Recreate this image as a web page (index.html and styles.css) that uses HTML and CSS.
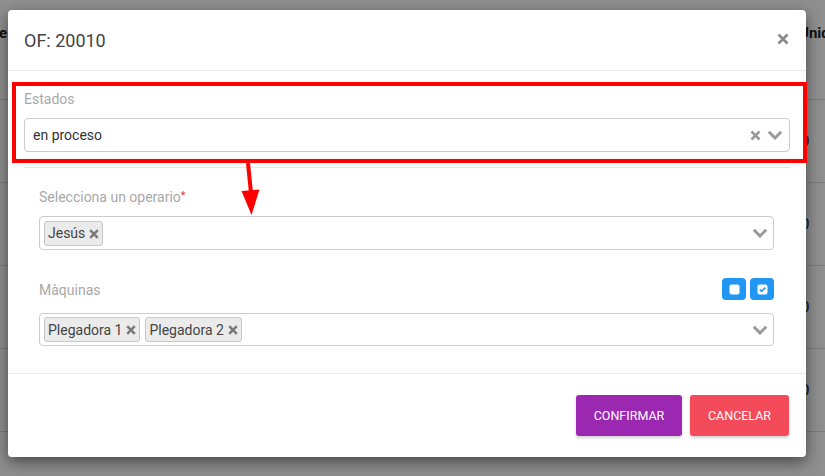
FILE: index.html
```html
<!DOCTYPE html>
<html lang="es">
<head>
<meta charset="utf-8">
<title>OF: 20010</title>
<link rel="stylesheet" href="styles.css">
</head>
<body>
<div class="page">
  <div class="thead">
    <div class="th th-left"><span>Nombre de fase</span></div>
    <div class="th-spacer"></div>
    <div class="th th-right">Unidades</div>
  </div>
  <div class="trow"><div class="td-spacer"></div><div class="td">0</div></div>
  <div class="trow"><div class="td-spacer"></div><div class="td">0</div></div>
  <div class="trow"><div class="td-spacer"></div><div class="td">0</div></div>
  <div class="trow"><div class="td-spacer"></div><div class="td">0</div></div>
</div>
<div class="overlay"></div>

<div class="modal">
  <div class="modal-header">
    <h4 class="modal-title">OF: 20010</h4>
    <svg class="close" width="12" height="12" viewBox="0 0 12 12"><path d="M1.5 1.5L10.5 10.5M10.5 1.5L1.5 10.5" stroke="#8a8a8a" stroke-width="2.6" stroke-linecap="butt"/></svg>
  </div>
  <div class="modal-body">
    <div class="group highlight">
      <label class="label">Estados</label>
      <div class="select">
        <span class="value">en proceso</span>
        <span class="indicators">
          <svg width="11" height="11" viewBox="0 0 11 11"><path d="M1.5 1.5L9.5 9.5M9.5 1.5L1.5 9.5" stroke="#9a9a9a" stroke-width="2.6"/></svg>
          <svg width="16" height="10" viewBox="0 0 16 10"><path d="M1.8 1.8L8 8L14.2 1.8" stroke="#9a9a9a" stroke-width="3" fill="none"/></svg>
        </span>
      </div>
    </div>
    <div class="divider"></div>
    <div class="fields">
      <div class="group">
        <label class="label">Selecciona un operario<span class="req">*</span></label>
        <div class="select multi">
          <span class="tags">
            <span class="tag">Jesús<svg width="10" height="10" viewBox="0 0 10 10"><path d="M1.2 1.2L8.8 8.8M8.8 1.2L1.2 8.8" stroke="#7a7a7a" stroke-width="2.6"/></svg></span>
          </span>
          <span class="indicators">
            <svg width="16" height="10" viewBox="0 0 16 10"><path d="M1.8 1.8L8 8L14.2 1.8" stroke="#9a9a9a" stroke-width="3" fill="none"/></svg>
          </span>
        </div>
      </div>
      <div class="group group-maq">
        <div class="label-row">
          <label class="label">Màquinas</label>
          <div class="toggles">
            <span class="btn-blue"><svg width="11" height="11" viewBox="0 0 11 11"><rect x="0.5" y="0.5" width="10" height="10" rx="2" fill="#fff"/></svg></span>
            <span class="btn-blue"><svg width="11" height="11" viewBox="0 0 11 11"><rect x="0.5" y="0.5" width="10" height="10" rx="2" fill="#fff"/><path d="M2.8 5.6L4.6 7.3L8.3 3.6" stroke="#2196f3" stroke-width="1.6" fill="none"/></svg></span>
          </div>
        </div>
        <div class="select multi">
          <span class="tags">
            <span class="tag">Plegadora 1<svg width="10" height="10" viewBox="0 0 10 10"><path d="M1.2 1.2L8.8 8.8M8.8 1.2L1.2 8.8" stroke="#7a7a7a" stroke-width="2.6"/></svg></span>
            <span class="tag">Plegadora 2<svg width="10" height="10" viewBox="0 0 10 10"><path d="M1.2 1.2L8.8 8.8M8.8 1.2L1.2 8.8" stroke="#7a7a7a" stroke-width="2.6"/></svg></span>
          </span>
          <span class="indicators">
            <svg width="16" height="10" viewBox="0 0 16 10"><path d="M1.8 1.8L8 8L14.2 1.8" stroke="#9a9a9a" stroke-width="3" fill="none"/></svg>
          </span>
        </div>
      </div>
    </div>
  </div>
  <div class="modal-footer">
    <button class="btn btn-confirm">CONFIRMAR</button>
    <button class="btn btn-cancel">CANCELAR</button>
  </div>
</div>

<svg class="annotation" width="825" height="476" viewBox="0 0 825 476">
  <path d="M248 163L251 193" stroke="#ff0000" stroke-width="4" fill="none"/>
  <path d="M241.5 191L259.5 189.5L251.5 215Z" fill="#ff0000"/>
</svg>
</body>
</html>
```
FILE: styles.css
```css
* { box-sizing: border-box; }
html, body {
  margin: 0;
  padding: 0;
}
body {
  width: 825px;
  height: 476px;
  overflow: hidden;
  position: relative;
  background: #fff;
  font-family: Roboto, "Liberation Sans", sans-serif;
  color: #333;
}

/* background page */
.page { width: 825px; overflow: hidden; }
.thead {
  display: flex;
  height: 100px;
  border-bottom: 1px solid #ddd;
  font-weight: 700;
  font-size: 15px;
  color: #222;
}
.thead > div, .trow > div { flex-shrink: 0; }
.th {
  padding-top: 24px;
  white-space: nowrap;
}
.th-left {
  width: 7px;
  display: flex;
  justify-content: flex-end;
}
.th-spacer { width: 792px; }
.trow {
  display: flex;
  height: 83px;
  border-bottom: 1px solid #ddd;
  font-size: 15px;
  color: #222;
}
.td-spacer { width: 801px; }
.td { padding-top: 32px; }

.overlay {
  position: absolute;
  inset: 0;
  background: rgba(0, 0, 0, 0.44);
}

/* modal */
.modal {
  position: absolute;
  left: 8px;
  top: 10px;
  width: 798px;
  height: 447px;
  background: #fff;
  border-radius: 4px;
  box-shadow: 0 5px 15px rgba(0, 0, 0, 0.5);
  display: flex;
  flex-direction: column;
}
.modal-header {
  height: 61px;
  border-bottom: 1px solid #e9e9e9;
  display: flex;
  align-items: center;
  justify-content: space-between;
  padding: 0 17px 0 16px;
}
.modal-title {
  margin: 0;
  font-size: 18px;
  font-weight: 400;
  color: #444;
}
.close { display: block; margin-top: -2px; }

.modal-body {
  flex: 1;
  padding-top: 11px;
}
.group.highlight {
  margin-left: 4px;
  width: 795px;
  border: 4px solid #ff0000;
  padding: 3px 13px 7px 8px;
}
.label {
  display: block;
  font-size: 14px;
  line-height: 20px;
  color: #a8a8a8;
}
.req { color: #e53935; font-size: 11px; vertical-align: 3px; }
.select {
  margin-top: 9px;
  height: 34px;
  border: 1px solid #ccc;
  border-radius: 4px;
  display: flex;
  align-items: center;
  justify-content: space-between;
  padding: 0 6px 0 8px;
}
.value { font-size: 14px; color: #333; }
.indicators {
  display: flex;
  align-items: center;
  gap: 6px;
}
.indicators svg { display: block; }

.divider {
  margin: 4px 16px 0 16px;
  height: 1px;
  background: #ebe4d6;
}
.fields { padding: 18px 32px 0 31px; }
.select.multi { padding: 0 5px 0 4px; }
.tags { display: flex; gap: 5px; }
.tag {
  display: inline-flex;
  align-items: center;
  gap: 4px;
  height: 25px;
  padding: 0 3px 0 3px;
  background: #ebebeb;
  border: 1px solid #c8c8c8;
  border-radius: 3px;
  font-size: 14px;
  color: #444;
}
.tag svg { display: block; margin-top: 1px; }

.group-maq { margin-top: 28px; }
.label-row {
  height: 22px;
  display: flex;
  align-items: center;
  justify-content: space-between;
}
.label-row .label { margin-top: 1px; }
.toggles { display: flex; gap: 4px; }
.btn-blue {
  width: 24px;
  height: 22px;
  background: #2196f3;
  border-radius: 4px;
  display: flex;
  align-items: center;
  justify-content: center;
}
.btn-blue svg { display: block; }
.group-maq .select { margin-top: 13px; height: 33px; }

.modal-footer {
  height: 84px;
  border-top: 1px solid #e9e9e9;
  display: flex;
  justify-content: flex-end;
  align-items: flex-start;
  gap: 8px;
  padding: 21px 17px 0 0;
}
.btn {
  height: 41px;
  border: none;
  border-radius: 3px;
  color: #fff;
  font-family: Roboto, "Liberation Sans", sans-serif;
  font-size: 12.5px;
  font-weight: 400;
  box-shadow: 0 2px 3px rgba(0, 0, 0, 0.18);
}
.btn-confirm { width: 106px; background: #9c27b0; }
.btn-cancel { width: 99px; background: #f44b5b; }

.annotation {
  position: absolute;
  left: 0;
  top: 0;
  pointer-events: none;
}
```
